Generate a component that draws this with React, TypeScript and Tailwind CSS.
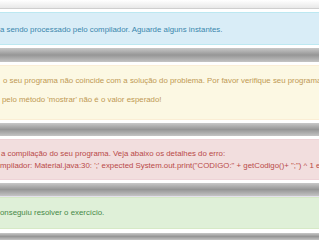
const font = { fontFamily: '"Liberation Sans", Arial, sans-serif' };

function Sep({ h }: { h: string }) {
  return <div className={`${h} w-full bg-linear-to-b from-[#c8c8c8] via-[#969696] to-[#c4c4c4]`} />;
}

export default function App() {
  return (
    <div className="w-[319px] h-[240px] overflow-hidden bg-white text-[7.85px] leading-[12px]" style={font}>
      {/* top of the previous shot */}
      <div className="h-[8px] bg-linear-to-b from-white to-[#e8e8e8]" />
      <div className="h-px bg-[#cfcfcf]" />
      <div className="h-[3px] bg-white" />

      {/* info */}
      <div className="h-[33px] border-y border-[#bce8f1] bg-[#d9edf7] pt-[11px] text-[#3a87ad] whitespace-nowrap">
        <p>a sendo processado pelo compilador. Aguarde alguns instantes.</p>
      </div>
      <div className="h-[3px] bg-white" />
      <Sep h="h-[14px]" />
      <div className="h-[3px] bg-white" />

      {/* warning */}
      <div className="h-[55px] border-y border-[#fbeed5] bg-[#fcf8e3] pt-[9px] text-[#c09853] whitespace-nowrap">
        <p className="pl-[3px]">o seu programa não coincide com a solução do problema. Por favor verifique seu programa.</p>
        <p className="mt-[7px] pl-[2px]">pelo método 'mostrar' não é o valor esperado!</p>
      </div>
      <div className="h-[3px] bg-white" />
      <Sep h="h-[13px]" />
      <div className="h-[3px] bg-white" />

      {/* error */}
      <div className="h-[41px] border-y border-[#eed3d7] bg-[#f2dede] pt-[8px] text-[#b94a48] whitespace-nowrap">
        <p className="pl-px">a compilação do seu programa. Veja abaixo os detalhes do erro:</p>
        <p>mpilador: Material.java:30: ';' expected System.out.print("CODIGO:" + getCodigo()+ ";") ^ 1 error</p>
      </div>
      <div className="h-[3px] bg-white" />
      <Sep h="h-[13px]" />
      <div className="h-px bg-[#e4e2ec]" />

      {/* success */}
      <div className="h-[32px] border-y border-[#d6e9c6] bg-[#dff0d8] pt-[9px] text-[#468847] whitespace-nowrap">
        <p>onseguiu resolver o exercício.</p>
      </div>
      <div className="h-[4px] bg-white" />
      <Sep h="h-[7px]" />
    </div>
  );
}
